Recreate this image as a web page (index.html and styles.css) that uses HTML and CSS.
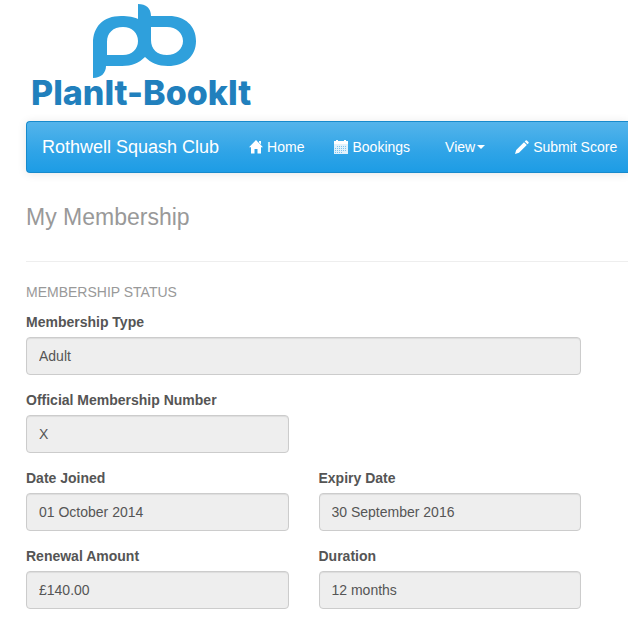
FILE: index.html
```html
<!DOCTYPE html>
<html lang="en">
<head>
<meta charset="utf-8">
<meta name="viewport" content="width=device-width, initial-scale=1">
<title>My Membership</title>
<link rel="stylesheet" href="styles.css">
</head>
<body>
<header class="site-header">
  <div class="logo">
    <svg class="logo-mark" viewBox="93 4 104 74" aria-hidden="true">
      <path fill-rule="evenodd" d="M93 78V43C93 27 103 16 121 16C129 16 134 17 138 19V4C146 4 151 8 151 16H169C185 16 196 26 196 41C196 56 185 66 168 66C158 66 151 63 145 57C139 63 132 66 122 66H106C106 73 101 78 93 78ZM107 55H123C132 55 138 49 138 41C138 33 132 27 123 27C113 27 107 33 107 42ZM151 27V40C151 49 157 55 167 55C176 55 183 49 183 41C183 33 176 27 167 27Z"/>
    </svg>
    <span class="logo-name">PlanIt-BookIt</span>
  </div>
</header>
<nav class="navbar">
  <a class="brand" href="#">Rothwell Squash Club</a>
  <a class="nav-link" href="#">
    <svg class="icon" viewBox="0 0 14 14" aria-hidden="true"><path d="M7 0L14 7.3H12V13.5H8.5V9H5.5V13.5H2V7.3H0L7 0ZM10 1H12V4.5L10 2.5Z"/></svg>
    <span>Home</span>
  </a>
  <a class="nav-link" href="#">
    <svg class="icon" viewBox="0 0 14 14" aria-hidden="true"><path d="M0 1H2V0H4V1H10V0H12V1H14V4H0Z"/><path fill-opacity=".85" d="M0 4H14V14H0Z"/><path class="icon-dots" d="M3 6H4V7H3ZM5 6H6V7H5ZM7 6H8V7H7ZM9 6H10V7H9ZM11 6H12V7H11ZM1 8H2V9H1ZM3 8H4V9H3ZM5 8H6V9H5ZM7 8H8V9H7ZM9 8H10V9H9ZM11 8H12V9H11ZM1 10H2V11H1ZM3 10H4V11H3ZM5 10H6V11H5ZM7 10H8V11H7ZM9 10H10V11H9ZM11 10H12V11H11ZM1 12H2V13H1ZM3 12H4V13H3ZM5 12H6V13H5ZM7 12H8V13H7Z"/></svg>
    <span>Bookings</span>
  </a>
  <a class="nav-link nav-menu" href="#"><span>View</span><span class="caret"></span></a>
  <a class="nav-link" href="#">
    <svg class="icon" viewBox="0 0 14 14" aria-hidden="true"><path d="M0 14L1.2 10L9 2.2L11.8 5L4 12.8ZM9.7 1.5L10.7.5Q11.3 0 11.9.5L13.5 2.1Q14 2.7 13.5 3.3L12.5 4.3Z"/></svg>
    <span>Submit Score</span>
  </a>
</nav>
<main class="content">
  <h1 class="title">My Membership</h1>
  <form class="membership">
    <h2 class="section-title">MEMBERSHIP STATUS</h2>
    <div class="field field-full">
      <label for="type">Membership Type</label>
      <input id="type" type="text" value="Adult" readonly>
    </div>
    <div class="field field-first">
      <label for="number">Official Membership Number</label>
      <input id="number" type="text" value="X" readonly>
    </div>
    <div class="field field-first">
      <label for="joined">Date Joined</label>
      <input id="joined" type="text" value="01 October 2014" readonly>
    </div>
    <div class="field">
      <label for="expiry">Expiry Date</label>
      <input id="expiry" type="text" value="30 September 2016" readonly>
    </div>
    <div class="field">
      <label for="amount">Renewal Amount</label>
      <input id="amount" type="text" value="£140.00" readonly>
    </div>
    <div class="field">
      <label for="duration">Duration</label>
      <input id="duration" type="text" value="12 months" readonly>
    </div>
  </form>
</main>
</body>
</html>
```
FILE: styles.css
```css
* {
  box-sizing: border-box;
}

body {
  margin: 0;
  padding-left: 26px;
  background: #fff;
  color: #555;
  font: 14px/20px "Liberation Sans", Arial, sans-serif;
}

.site-header {
  display: flex;
  padding: 4px 5px 13px;
}

.logo {
  display: flex;
  flex-direction: column;
  align-items: center;
}

.logo-mark {
  width: 104px;
  height: 74px;
  margin-left: 8px;
  fill: #2fa0dc;
}

.logo-name {
  color: #2180bd;
  font: 800 34px/30px Inter, sans-serif;
}

.navbar {
  display: flex;
  align-items: center;
  height: 52px;
  padding-left: 15px;
  border: 1px solid #178acc;
  border-right: 0;
  border-radius: 4px 0 0 4px;
  background: linear-gradient(#54b4eb, #2fa4e7 60%, #1d9ce5);
  box-shadow: 0 1px 10px rgba(0, 0, 0, 0.1);
  white-space: nowrap;
}

.navbar a {
  color: #fff;
  text-decoration: none;
}

.brand {
  margin-right: 15px;
  font-size: 18px;
}

.nav-link {
  display: flex;
  align-items: center;
  gap: 4px;
  padding: 0 15px;
}

.nav-menu {
  gap: 2px;
  padding: 0 15px 0 20px;
}

.icon {
  width: 14px;
  height: 14px;
  fill: #fff;
}

.icon-dots {
  fill: #7cc4ef;
}

.caret {
  border: 4px solid transparent;
  border-top-color: #fff;
  border-bottom: 0;
}

.title {
  margin: 0;
  padding: 30px 0;
  border-bottom: 1px solid #eee;
  color: #999;
  font-size: 23px;
  font-weight: 400;
  line-height: 28px;
}

.membership {
  display: grid;
  grid-template-columns: 1fr 1fr;
  gap: 15px 30px;
  margin-right: 47px;
  padding-top: 20px;
}

.section-title {
  grid-column: 1 / -1;
  margin: 0 0 -5px;
  color: #999;
  font-size: 14px;
  font-weight: 400;
}

.field {
  display: flex;
  flex-direction: column;
  gap: 5px;
}

.field-full {
  grid-column: 1 / -1;
}

.field-first {
  grid-column-start: 1;
}

.field label {
  font-weight: 700;
}

.field input {
  width: 100%;
  height: 38px;
  padding: 8px 12px;
  border: 1px solid #ccc;
  border-radius: 4px;
  background: #eee;
  box-shadow: inset 0 1px 1px rgba(0, 0, 0, 0.075);
  color: #555;
  font: inherit;
}
```
